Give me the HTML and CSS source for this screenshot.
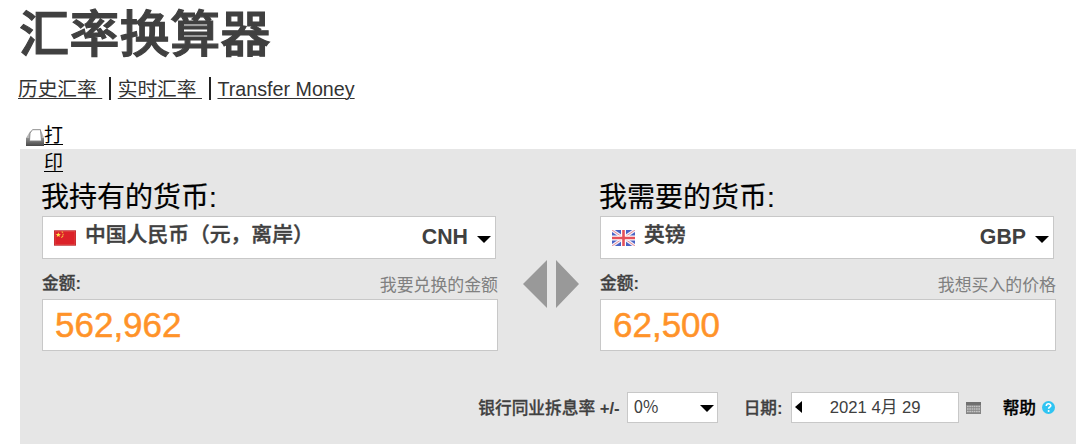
FILE: index.html
```
<!DOCTYPE html>
<html lang="zh-CN">
<head>
  <meta charset="UTF-8" />
  <meta name="viewport" content="width=device-width, initial-scale=1.0"/>
  <title>汇率换算器</title>
  <link rel="stylesheet" href="styles.css">
</head>
<body>

  <h1>汇率换算器</h1>
  <nav class="links">
    <a href="#">历史汇率&nbsp;</a>
    <a href="#">实时汇率&nbsp;</a>
    <a href="#">Transfer Money</a>
  </nav>

  <!-- Print link, wraps down over the converter -->
  <a class="print" href="#">
    <svg width="18" height="17" viewBox="0 0 18 17">
      <defs>
        <linearGradient id="tray" x1="0" y1="0" x2="0" y2="1">
          <stop offset="0" stop-color="#909090"/>
          <stop offset="1" stop-color="#484848"/>
        </linearGradient>
      </defs>
      <path d="M4 2.500L0 9v8h18V9l-2.500-6.500z" fill="#b5b5b5"/>
      <path d="M0 9h18v8H0z" fill="url(#tray)"/>
      <path d="M6.500 0.700h8l1 11.300h-12L4 4z" fill="#fff" stroke="#808080" stroke-width="0.900"/>
    </svg>
    <span>打印</span>
  </a>

  <div class="converter">
    <div class="currencies">
      <div class="currency">
        <h2>我持有的货币:</h2>
        <div class="picker">
          <svg class="flag" width="22" height="16" viewBox="0 0 23 16">
            <path d="M0 0h23v16H0z" fill="#b81c26"/>
            <path d="M1 1h21v14H1z" fill="#dc2129" stroke="#e8574f" stroke-width="0.700"/>
            <path d="M4.500 2l.7 1.900h2L5.600 5l.6 2-1.700-1.200L2.800 7l.6-2-1.600-1.100h2z" fill="#fde34a"/>
            <path d="M8 1.500l1.500.8M9.500 3.500v1.500M9.500 5.500l-1 1.500M7.500 7.500l1-.5" stroke="#f3b83c" stroke-width="1.100"/>
          </svg>
          <span class="name">中国人民币（元，离岸）</span>
          <span class="code">CNH</span>
          <i class="caret"></i>
        </div>
        <div class="amount-label">
          <b>金额<strong>:</strong></b>
          <span>我要兑换的金额</span>
        </div>
        <div class="amount">562,962</div>
      </div>

      <div class="swap">
        <svg width="56" height="48" viewBox="0 0 56 48">
          <path d="M24 0v48L0 24zM33 0v48l23-24z" fill="#999"/>
        </svg>
      </div>

      <div class="currency">
        <h2>我需要的货币:</h2>
        <div class="picker">
          <svg class="flag" width="23" height="16" viewBox="0 0 23 16">
            <path d="M0 0h23v16H0z" fill="#4a62c4"/>
            <path d="M0 0l23 16M23 0L0 16" stroke="#f1eef8" stroke-width="3.200"/>
            <path d="M0 0l23 16M23 0L0 16" stroke="#ec8d96" stroke-width="1"/>
            <path d="M11.500 0v16M0 8h23" stroke="#fff" stroke-width="5"/>
            <path d="M11.500 0v16M0 8h23" stroke="#e5515a" stroke-width="2.600"/>
          </svg>
          <span class="name">英镑</span>
          <span class="code">GBP</span>
          <i class="caret"></i>
        </div>
        <div class="amount-label">
          <b>金额<strong>:</strong></b>
          <span>我想买入的价格</span>
        </div>
        <div class="amount">62,500</div>
      </div>
    </div>

    <div class="options">
      <b>银行同业拆息率 <strong>+/-</strong></b>
      <div class="rate">0%<i class="caret"></i></div>
      <b class="date-label">日期<strong>:</strong></b>
      <div class="date"><i class="prev"></i><span>2021 4月 29</span></div>
      <svg class="calendar" width="15" height="12" viewBox="0 0 15 12">
        <path d="M0 0h15v12H0z" fill="#858585"/>
        <path d="M0 0h15v3H0z" fill="#707070"/>
        <path d="M1 4.500h13M1 7h13M1 9.500h13" stroke="#c4c4c4" stroke-width="1.500" stroke-dasharray="1.700 0.560"/>
      </svg>
      <b class="help">帮助</b>
      <svg class="help-icon" width="13" height="13" viewBox="0 0 13 13">
        <circle cx="6.500" cy="6.500" r="6.500" fill="#2fc4f2"/>
        <path d="M4.300 5c0-3 4.500-2.800 4.500-.3 0 1.500-2.200 1.500-2.200 3.100" fill="none" stroke="#fff" stroke-width="1.600"/>
        <circle cx="6.600" cy="9.900" r="1" fill="#fff"/>
      </svg>
    </div>
  </div>

</body>
</html>
```

FILE: styles.css
```
* {
  box-sizing: border-box;
}

body {
  font-family: "Liberation Sans", "Noto Sans CJK SC", sans-serif;
  margin: 0;
  padding: 0 4px 0 20px;
  background: #fff;
  color: #404040;
  overflow: hidden;
}

svg {
  display: block;
  flex: none;
}

h1 {
  margin: 0 0 0 -1px;
  font-size: 50.300px;
  font-weight: 500;
  line-height: 70px;
  height: 72px;
  -webkit-text-stroke: 1.100px #404040;
}

/* === TOP LINKS === */
.links {
  display: flex;
  height: 77px;
  padding-top: 5px;
  margin-left: -2px;
  font-size: 19.700px;
  line-height: 24px;
}

.links a {
  color: #333;
  height: 23px;
  text-underline-offset: 2px;
  text-decoration-thickness: 1px;
}

.links a + a {
  border-left: 2px solid #222;
  margin-left: 7px;
  padding-left: 6.500px;
}

.print {
  position: absolute;
  left: 26px;
  top: 122px;
  display: flex;
  width: 37px;
  color: #000;
  font-size: 19px;
  line-height: 27px;
  text-underline-offset: 2px;
}

.print svg {
  margin-top: 7px;
}

/* === CONVERTER === */
.converter {
  background: #e6e6e6;
  height: 295px;
  padding: 31px 20px 0 22px;
}

.currencies {
  display: flex;
}

.currency {
  width: 456px;
}

h2 {
  margin: 0 0 0 -1px;
  color: #000;
  font-size: 28px;
  font-weight: 400;
  line-height: 36px;
  height: 36px;
  -webkit-text-stroke: 0.200px #000;
}

.picker {
  display: flex;
  align-items: center;
  width: 454px;
  height: 43px;
  padding: 0 4px 0 11px;
  background: #fff;
  border: 1px solid #c8c8c8;
}

.name {
  margin: -10px auto 0 9px;
  font-size: 20.800px;
  font-weight: 500;
  -webkit-text-stroke: 0.400px #404040;
}

.flag {
  margin-top: 1px;
}

.code {
  font-size: 21.300px;
  font-weight: 700;
  margin-right: 9px;
}

.caret {
  width: 0;
  height: 0;
  margin-top: 4px;
  border: 7px solid transparent;
  border-top-color: #000;
  border-bottom: 0;
}

.amount-label {
  display: flex;
  justify-content: space-between;
  height: 40px;
  padding-top: 14px;
  font-size: 16.900px;
  line-height: 24px;
}

.amount-label span {
  margin-top: 1px;
  color: #808080;
}

b {
  font-weight: 500;
  -webkit-text-stroke: 0.300px;
}

strong {
  font-weight: 700;
  -webkit-text-stroke: 0;
}

.amount-label b {
  margin-top: -1px;
  font-size: 16.700px;
}

.amount {
  height: 52px;
  padding-left: 12px;
  background: #fff;
  border: 1px solid #c8c8c8;
  color: #ff9329;
  font-size: 35px;
  line-height: 49px;
  -webkit-text-stroke: 0.500px #ff9329;
}

.swap {
  width: 102px;
  padding: 80px 0 0 25px;
}

/* === OPTIONS ROW === */
.options {
  display: flex;
  align-items: center;
  justify-content: flex-end;
  height: 31px;
  margin-top: 41px;
  padding-right: 1px;
  font-size: 16.700px;
}

.options b {
  margin-top: -2px;
}

.rate,
.date {
  display: flex;
  align-items: center;
  height: 31px;
  background: #fff;
  border: 1px solid #c8c8c8;
}

.rate {
  width: 91px;
  margin: 0 26px 0 7px;
  padding: 0 3px 3px 6px;
  justify-content: space-between;
  font-family: "Noto Sans CJK SC", sans-serif;
  font-size: 16.700px;
}

.date {
  width: 168px;
  margin: 0 7px 0 8px;
  padding-left: 3px;
}

.date span {
  margin: -3px 0 0 28px;
}

.prev {
  width: 0;
  height: 0;
  margin-top: -2px;
  border: 6px solid transparent;
  border-right: 7px solid #000;
  border-left: 0;
}

.options .help {
  margin: -2px 6px 0 22px;
  color: #000;
}
```
